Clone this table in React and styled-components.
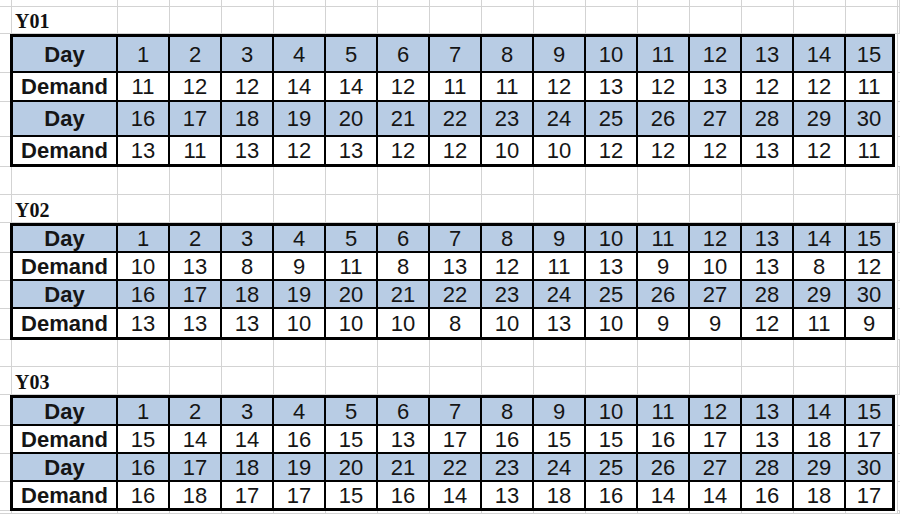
import React from 'react';
import styled, { createGlobalStyle } from 'styled-components';

const GRID = '#d3d3d3';
const INK = '#151515';
const FILL = '#b8cce4';

const Global = createGlobalStyle`
  html, body { margin: 0; padding: 0; background: #fff; }
  body { font-family: "Liberation Sans", Arial, sans-serif; }
  * { box-sizing: border-box; }
`;

const Sheet = styled.div`
  width: 900px;
  height: 514px;
  overflow: hidden;
  display: flex;
  flex-direction: column;
  background: #fff;
`;

const SheetRow = styled.div`
  display: grid;
  grid-template-columns: 12px 106px repeat(15, 52px) 1fr;
  height: ${(p) => p.$h}px;
  flex: ${(p) => (p.$fill ? '1' : 'none')};
`;

const SheetCell = styled.div`
  border-right: 1px solid ${GRID};
  border-bottom: 1px solid ${GRID};
  min-width: 0;
`;

const LabelCell = styled(SheetCell)`
  display: flex;
  align-items: flex-end;
  padding: 0 0 1px 3px;
  font-family: "Liberation Serif", "Times New Roman", serif;
  font-weight: 700;
  font-size: 20px;
  line-height: 22px;
  color: #111;
  white-space: nowrap;
`;

const TableBand = styled.div`
  display: flex;
  flex: none;
`;

const Gutter = styled.div`
  display: flex;
  flex-direction: column;
  width: 10px;
  flex: none;
`;

const RightGutter = styled.div`
  display: flex;
  flex-direction: column;
  flex: 1;
  margin-left: 2px;
  border-left: 1px solid ${GRID};
`;

const GutterCell = styled.div`
  height: ${(p) => p.$h}px;
  border-bottom: 1px solid ${GRID};
  flex: none;
`;

const Table = styled.div`
  width: 885px;
  flex: none;
  border: 3px solid #000;
  display: grid;
  grid-template-columns: 105px repeat(14, 52px) 46px;
  grid-template-rows: ${(p) => p.$rows.map((r) => `${r}px`).join(' ')};
  background: #fff;
`;

const DataCell = styled.div`
  display: flex;
  align-items: center;
  justify-content: center;
  background: ${(p) => (p.$head ? FILL : '#fff')};
  border-right: ${(p) => (p.$lastCol ? 'none' : '2px solid #000')};
  border-bottom: ${(p) => (p.$lastRow ? 'none' : '2px solid #000')};
  font-size: 22px;
  line-height: 1;
  font-weight: ${(p) => (p.$label ? 700 : 400)};
  color: ${INK};
  white-space: nowrap;
  padding-top: 1px;
`;

const sections = [
  {
    name: 'Y01',
    before: 0,
    rows: [36, 29, 35, 27],
    d1: [11, 12, 12, 14, 14, 12, 11, 11, 12, 13, 12, 13, 12, 12, 11],
    d2: [13, 11, 13, 12, 13, 12, 12, 10, 10, 12, 12, 12, 13, 12, 11],
  },
  {
    name: 'Y02',
    rows: [27, 28, 28, 28],
    d1: [10, 13, 8, 9, 11, 8, 13, 12, 11, 13, 9, 10, 13, 8, 12],
    d2: [13, 13, 13, 10, 10, 10, 8, 10, 13, 10, 9, 9, 12, 11, 9],
  },
  {
    name: 'Y03',
    rows: [28, 28, 28, 26],
    d1: [15, 14, 14, 16, 15, 13, 17, 16, 15, 15, 16, 17, 13, 18, 17],
    d2: [16, 18, 17, 17, 15, 16, 14, 13, 18, 16, 14, 14, 16, 18, 17],
  },
];

const days1 = Array.from({ length: 15 }, (_, i) => i + 1);
const days2 = Array.from({ length: 15 }, (_, i) => i + 16);

function BlankRow({ h, fill }) {
  return (
    <SheetRow $h={h} $fill={fill}>
      {Array.from({ length: 18 }, (_, i) => (
        <SheetCell key={i} />
      ))}
    </SheetRow>
  );
}

function LabelRow({ h, label }) {
  return (
    <SheetRow $h={h}>
      <SheetCell />
      <LabelCell>{label}</LabelCell>
      {Array.from({ length: 16 }, (_, i) => (
        <SheetCell key={i} />
      ))}
    </SheetRow>
  );
}

function DemandTable({ section }) {
  const { rows, d1, d2 } = section;
  const gut = [rows[0] + 3, rows[1], rows[2], rows[3] + 3];
  const lines = [
    { label: 'Day', values: days1, head: true },
    { label: 'Demand', values: d1, head: false },
    { label: 'Day', values: days2, head: true },
    { label: 'Demand', values: d2, head: false },
  ];
  return (
    <TableBand>
      <Gutter>
        {gut.map((h, i) => (
          <GutterCell key={i} $h={h} />
        ))}
      </Gutter>
      <Table $rows={rows}>
        {lines.map((line, r) => (
          <React.Fragment key={r}>
            <DataCell $head={line.head} $label $lastRow={r === 3}>
              {line.label}
            </DataCell>
            {line.values.map((v, c) => (
              <DataCell
                key={c}
                $head={line.head}
                $lastCol={c === 14}
                $lastRow={r === 3}
              >
                {v}
              </DataCell>
            ))}
          </React.Fragment>
        ))}
      </Table>
      <RightGutter>
        {gut.map((h, i) => (
          <GutterCell key={i} $h={h} />
        ))}
      </RightGutter>
    </TableBand>
  );
}

export default function App() {
  return (
    <>
      <Global />
      <Sheet>
        <BlankRow h={7} />
        <LabelRow h={27} label="Y01" />
        <DemandTable section={sections[0]} />
        <BlankRow h={28} />
        <LabelRow h={28} label="Y02" />
        <DemandTable section={sections[1]} />
        <BlankRow h={27} />
        <LabelRow h={28} label="Y03" />
        <DemandTable section={sections[2]} />
        <BlankRow h={10} fill />
      </Sheet>
    </>
  );
}
